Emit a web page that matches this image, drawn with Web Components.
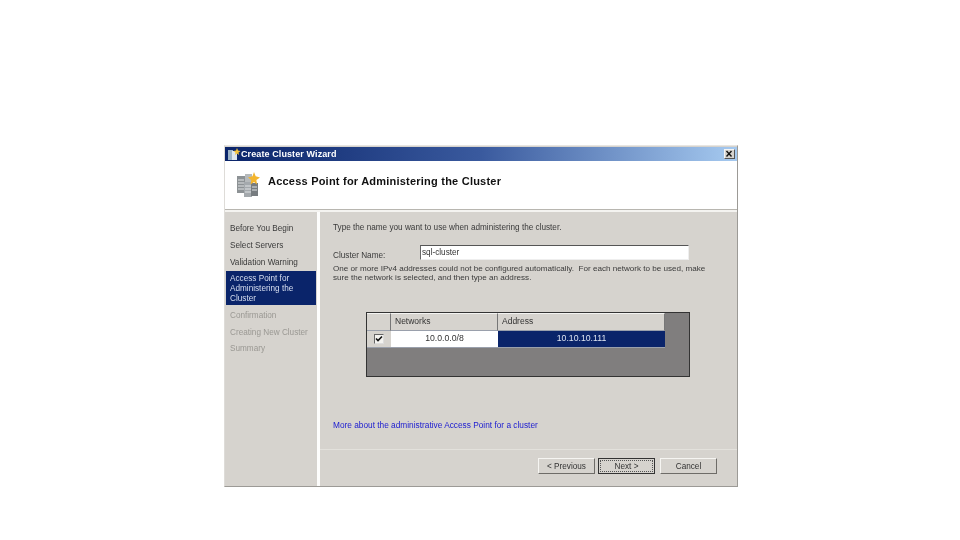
<!DOCTYPE html>
<html><head><meta charset="utf-8"><style>
html,body{margin:0;background:#fff}
body{width:960px;height:540px;overflow:hidden;font-family:"Liberation Sans",Arial,sans-serif;padding:145px 0 0 224px;box-sizing:border-box}
</style></head><body>
<cluster-wizard>
  <wizard-step slot="steps" style="margin-top:9px">Before You Begin</wizard-step>
  <wizard-step slot="steps">Select Servers</wizard-step>
  <wizard-step slot="steps">Validation Warning</wizard-step>
  <wizard-step slot="steps" state="active">Access Point for Administering the Cluster</wizard-step>
  <wizard-step slot="steps" state="off">Confirmation</wizard-step>
  <wizard-step slot="steps" state="off">Creating New Cluster</wizard-step>
  <wizard-step slot="steps" state="off">Summary</wizard-step>
  <access-point-form></access-point-form>
  <wizard-button slot="buttons">&lt; Previous</wizard-button>
  <wizard-button slot="buttons" focused>Next &gt;</wizard-button>
  <wizard-button slot="buttons" style="margin-left:2px">Cancel</wizard-button>
</cluster-wizard>
<script>
class Base extends HTMLElement{
  constructor(html){super();this.attachShadow({mode:'open'}).innerHTML=html;}
}
customElements.define('cluster-wizard',class extends Base{constructor(){super(`<style>
:host{display:flex;flex-direction:column;width:514px;height:342px;box-sizing:border-box;background:#d6d3ce;border:1px solid #9c9a96;border-top-color:#e8e6e2;border-left-color:#dedcd8;padding:1px 0 0 0;color:#222;filter:blur(.4px)}
.title{height:14px;flex:none;background:linear-gradient(90deg,#0a246a 0,#3a5a9e 50%,#a6caf0 100%);display:flex;align-items:center;color:#fff;font-weight:700;font-size:9px;letter-spacing:.1px;padding-left:2px;gap:0}
.x{margin-left:auto;margin-right:2px;width:11px;height:10px;background:#d6d3ce;border:1px solid;border-color:#f4f4f4 #555 #555 #f4f4f4;box-sizing:border-box;display:flex}
.x svg{width:9px;height:8px}
.head{height:49px;flex:none;background:#fff;display:flex;align-items:center;padding-left:12px;gap:7px;border-bottom:1px solid #b8b6b0;box-sizing:border-box}
.head h1{margin:0 0 9px;font-size:11px;font-weight:700;color:#111;letter-spacing:.22px;white-space:nowrap}
.rule{height:2px;flex:none;background:#f4f3f0}
.main{flex:1;display:flex;min-height:0}
.side{width:92px;flex:none;display:flex;flex-direction:column}
.div{width:3px;flex:none;background:#fdfdfc}
.right{flex:1;display:flex;flex-direction:column;min-width:0}
.body{flex:1;min-height:0}
.foot{height:37px;flex:none;border-top:1px solid #e3e1dc;box-sizing:border-box;display:flex;align-items:flex-start;justify-content:flex-end;gap:3px;padding:8px 20px 0 0}
</style>
<div class="title"><svg width="14" height="13" viewBox="0 0 14 13"><rect x="1" y="2" width="5" height="10" fill="#9db4c8"/><rect x="5" y="3" width="5" height="9" fill="#dfe6ee"/><path d="M10 0l1 2.500 2.500.5-2 1.500.5 2.500-2-1.500-2 1.500.5-2.500-2-1.500 2.500-.5z" fill="#f5c33b"/></svg><span>Create Cluster Wizard</span><span class="x"><svg viewBox="0 0 9 8"><path d="M1.500 1l5 5.500M6.500 1l-5 5.500" stroke="#111" stroke-width="1.400"/></svg></span></div>
<div class="head"><svg width="24" height="26" viewBox="0 0 24 26"><rect x="0" y="4" width="8" height="17" fill="#8d9295"/><rect x="8" y="2" width="7" height="9" fill="#b6babc"/><rect x="7" y="10" width="8" height="15" fill="#a4a9ad"/><rect x="14" y="11" width="7" height="13" fill="#777c80"/><path d="M1 8h6M1 11h6M1 14h6M1 17h6M8 14h6M8 17h6M8 20h6M15 15h5M15 18h5" stroke="#dfe2e4"/><path d="M17 0l1.700 4.300 4.300 1.200-3.600 2.500.6 4.500-3-2.500-3.400 2.500.6-4.500-3.200-2.500 4.500-1.200z" fill="#f3b52e"/></svg><h1>Access Point for Administering the Cluster</h1></div>
<div class="rule"></div>
<div class="main"><div class="side"><slot name="steps"></slot></div><div class="div"></div>
<div class="right"><div class="body"><slot></slot></div><div class="foot"><slot name="buttons"></slot></div></div></div>`);}});
customElements.define('wizard-step',class extends Base{constructor(){super(`<style>
:host{display:block;font-size:8.2px;line-height:9.5px;padding:3px 5px 4px 5px;color:#3a3a3a;box-sizing:border-box;margin-bottom:.5px;white-space:nowrap}
:host([state=active]){background:#0a246a;color:#d8dff0;margin:-1px 1px 3px 1px;padding:2.500px 4px;height:34px;line-height:10px;white-space:normal}
:host([state=off]){color:#9a9893;margin-bottom:0}
</style><slot></slot>`);}});
customElements.define('wizard-button',class extends Base{constructor(){super(`<style>
:host{display:flex;align-items:center;justify-content:center;width:57px;height:16px;box-sizing:border-box;background:#d6d3ce;border:1px solid;border-color:#f6f5f2 #6e6c68 #6e6c68 #f6f5f2;font-size:8.2px;color:#333;white-space:nowrap}
:host([focused]){border-color:#333}
:host([focused]) span{outline:1px dotted #555;outline-offset:0;padding:1px 14px 0;line-height:9px}
</style><span><slot></slot></span>`);}});
customElements.define('network-grid',class extends Base{constructor(){super(`<style>
:host{display:block;width:324px;height:65px;box-sizing:border-box;background:#807e7e;border:1px solid #333}
.g{display:grid;grid-template-columns:24px 107px 167px;width:298px;font-size:8.5px;color:#333}
.h{height:18px;background:#d6d3ce;border-top:1px solid #f4f4f2;border-right:1px solid #777;border-bottom:1px solid #9aa0ac;box-sizing:border-box;display:flex;align-items:center;padding-left:4px}
.c{height:17px;background:#fff;display:flex;align-items:center;justify-content:center;font-size:8.7px;border-bottom:1px solid #9aa0ac;box-sizing:border-box}
.c.s{background:#0a246a;color:#dfe5f2}
.b{width:8px;height:8px;background:#f4f3f0;border:1px solid;border-color:#666 #ddd #ddd #666;display:block}
.b svg{display:block}
</style><div class="g"><div class="h"></div><div class="h">Networks</div><div class="h">Address</div>
<div class="c" style="background:#d6d3ce"><span class="b"><svg width="8" height="8" viewBox="0 0 8 8"><path d="M1 3.500l2 2 4-4" fill="none" stroke="#111" stroke-width="1.600"/></svg></span></div><div class="c">10.0.0.0/8</div><div class="c s">10.10.10.111</div></div>`);}});
customElements.define('access-point-form',class extends Base{constructor(){super(`<style>
:host{display:block;height:100%;font-size:8.2px;line-height:9.500px;color:#3a3a3a;padding:11px 0 0 13px;box-sizing:border-box}
p{margin:0}
.row{display:flex;align-items:flex-end;margin-top:12px}
.row label{width:87px;margin-bottom:-1px}
.input{width:269px;height:15px;box-sizing:border-box;background:#fff;border:1px solid;border-color:#555 #eee #eee #666;padding-left:1px;line-height:13px;color:#333}
.para{margin-top:4px;white-space:nowrap;font-size:8.1px}
network-grid{margin-top:29px;margin-left:33px}
a{display:block;margin-top:44px;color:#1a1ad0;white-space:nowrap;font-size:8.3px}
</style><p>Type the name you want to use when administering the cluster.</p>
<div class="row"><label>Cluster Name:</label><div class="input">sql-cluster</div></div>
<p class="para">One or more IPv4 addresses could not be configured automatically.&nbsp; For each network to be used, make<br>sure the network is selected, and then type an address.</p>
<network-grid></network-grid>
<a>More about the administrative Access Point for a cluster</a>`);}});
</script>
</body></html>
